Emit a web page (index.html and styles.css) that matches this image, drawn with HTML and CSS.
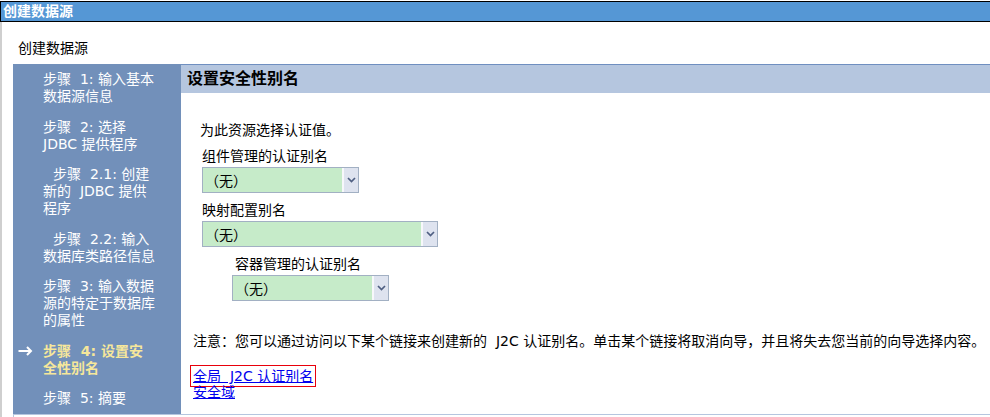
FILE: index.html
```html
<!DOCTYPE html>
<html lang="zh-CN">
<head>
<meta charset="utf-8">
<title>创建数据源</title>
<link rel="stylesheet" href="styles.css">
</head>
<body>
<div class="titlebar">创建数据源</div>
<div class="page">
  <div class="page-title">创建数据源</div>
  <div class="wizard">
    <div class="steps">
      <div class="step">步骤&nbsp; 1: 输入基本<br>数据源信息</div>
      <div class="step">步骤&nbsp; 2: 选择<br>JDBC 提供程序</div>
      <div class="step sub">步骤&nbsp; 2.1: 创建<br>新的&nbsp; JDBC 提供<br>程序</div>
      <div class="step sub">步骤&nbsp; 2.2: 输入<br>数据库类路径信息</div>
      <div class="step">步骤&nbsp; 3: 输入数据<br>源的特定于数据库<br>的属性</div>
      <div class="step current"><span class="arrow"><svg width="15" height="10" viewBox="0 0 15 10"><path d="M0.5 5H13M9 1l4 4-4 4" stroke="#fff" stroke-width="2" fill="none"/></svg></span>步骤&nbsp; 4: 设置安<br>全性别名</div>
      <div class="step">步骤&nbsp; 5: 摘要</div>
    </div>
    <div class="panel">
      <div class="panel-head">设置安全性别名</div>
      <div class="panel-body">
        <div class="form">
          <div class="intro">为此资源选择认证值。</div>
          <div class="field">
            <div class="label">组件管理的认证别名</div>
            <div class="select w-short"><span class="val cjk">（无）</span><span class="btn"><svg width="9" height="6" viewBox="0 0 9 6"><path d="M1 1l3.5 3.5L8 1" stroke="#4f5f82" stroke-width="1.7" fill="none"/></svg></span></div>
          </div>
          <div class="field">
            <div class="label">映射配置别名</div>
            <div class="select w-long"><span class="val cjk">（无）</span><span class="btn"><svg width="9" height="6" viewBox="0 0 9 6"><path d="M1 1l3.5 3.5L8 1" stroke="#4f5f82" stroke-width="1.7" fill="none"/></svg></span></div>
          </div>
          <div class="field indented">
            <div class="label">容器管理的认证别名</div>
            <div class="select w-short"><span class="val cjk">（无）</span><span class="btn"><svg width="9" height="6" viewBox="0 0 9 6"><path d="M1 1l3.5 3.5L8 1" stroke="#4f5f82" stroke-width="1.7" fill="none"/></svg></span></div>
          </div>
        </div>
        <div class="note">注意<span class="cjk">：</span>您可以通过访问以下某个链接来创建新的&nbsp; J2C 认证别名。单击某个链接将取消向导<span class="cjk">，</span>并且将失去您当前的向导选择内容。</div>
        <div class="links">
          <a href="#" class="link marked">全局&nbsp; J2C 认证别名</a><br>
          <a href="#" class="link">安全域</a>
        </div>
      </div>
    </div>
  </div>
  <div class="footer"></div>
</div>
</body>
</html>
```
FILE: styles.css
```css
html, body {
  margin: 0;
  padding: 0;
  background: #ffffff;
}
body {
  font-family: "DejaVu Sans", "Noto Sans CJK SC", sans-serif;
  font-size: 14px;
  color: #000;
}
.cjk {
  font-family: "Noto Sans CJK SC", sans-serif;
}
.titlebar {
  margin-top: 1px;
  height: 19px;
  line-height: 19px;
  background: #5597d5;
  border-top: 1px solid #000;
  border-bottom: 1px solid #000;
  border-left: 1px solid #000;
  color: #fff;
  font-weight: bold;
  padding-left: 2px;
  white-space: nowrap;
}
.page {
  border-left: 2px solid #cfcfcf;
  padding: 18px 0 0 11px;
  height: 395px;
  box-sizing: border-box;
}
.page-title {
  line-height: 17px;
  padding-left: 5px;
  margin-bottom: 7px;
}
.wizard {
  display: flex;
  height: 350px;
}
.steps {
  width: 168px;
  flex: none;
  background: #7290ba;
  color: #fff;
  padding: 7px 0 0 30px;
  box-sizing: border-box;
  line-height: 17px;
  white-space: nowrap;
}
.step + .step {
  margin-top: 13.5px;
}
.step.sub {
  text-indent: 10px;
}
.step.current {
  color: #f6e79a;
  font-weight: bold;
  text-indent: -25px;
}
.arrow {
  display: inline-block;
  width: 25px;
  text-indent: 0;
}
.arrow svg {
  display: block;
  margin-top: 3px;
}
.panel {
  flex: 1;
  min-width: 0;
}
.panel-head {
  border-top: 1px solid #6f8fc0;
  background: #b5c6df;
  height: 28px;
  line-height: 28px;
  padding-left: 6px;
  font-size: 16px;
  font-weight: bold;
  white-space: nowrap;
}
.panel-body {
  padding: 29px 0 0 12px;
}
.form {
  padding-left: 7px;
}
.intro {
  line-height: 17px;
}
.field {
  padding-left: 2px;
}
.field .label {
  line-height: 17px;
  margin-top: 9px;
}
.field.indented {
  padding-left: 32px;
}
.field.indented .label {
  padding-left: 3px;
}
.select {
  display: flex;
  box-sizing: border-box;
  height: 26px;
  margin-top: 2px;
  border: 1px solid #a2b0c3;
  background: #c6ebc9;
}
.w-short {
  width: 157px;
}
.w-long {
  width: 236px;
}
.select .val {
  flex: 1;
  line-height: 24px;
  padding-left: 2px;
  white-space: nowrap;
}
.select .btn {
  width: 14px;
  flex: none;
  background: #dee3ef;
  border-left: 2px solid #f7f8fb;
  display: flex;
  align-items: center;
  justify-content: center;
}
.note {
  margin-top: 31px;
  line-height: 17px;
  white-space: nowrap;
}
.links {
  margin-top: 18px;
  line-height: 16px;
}
.link {
  color: #0000ee;
  text-decoration: underline;
}
.link.marked {
  display: inline-block;
  outline: 1px solid #e8000b;
  outline-offset: 2px;
}
.footer {
  height: 3px;
  border-top: 1px solid #b5c6df;
  border-left: 1px solid #b5c6df;
}
```
